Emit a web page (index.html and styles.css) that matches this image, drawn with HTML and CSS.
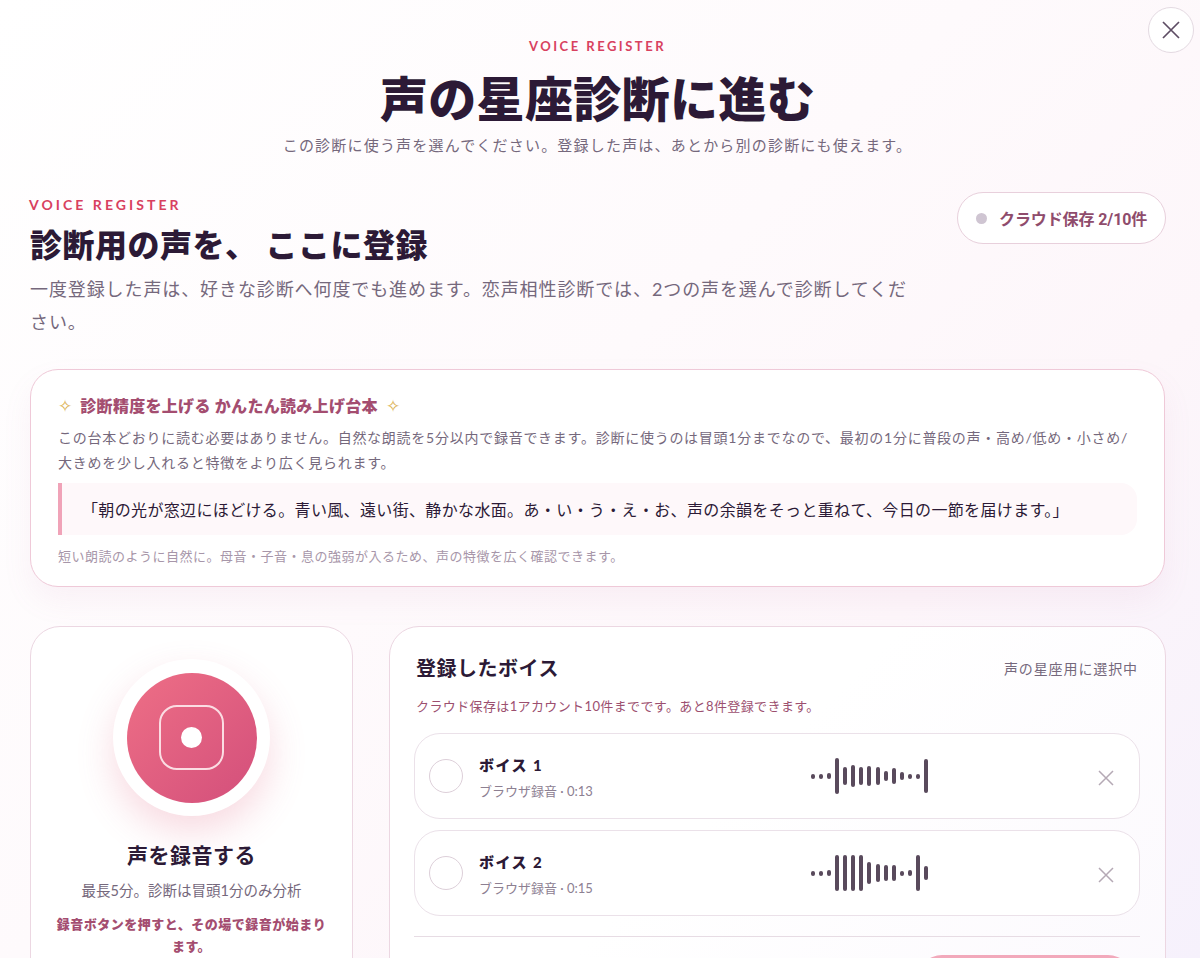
FILE: index.html
```html
<!DOCTYPE html>
<html lang="ja">
<head>
<meta charset="utf-8">
<title>声の星座診断に進む</title>
<link rel="stylesheet" href="styles.css">
</head>
<body>
<div class="modal">
  <button class="close" aria-label="閉じる"><svg viewBox="0 0 20 20" width="20" height="20"><path d="M2 2 L18 18 M18 2 L2 18"/></svg></button>
  <header class="top">
    <p class="eyebrow">VOICE REGISTER</p>
    <h1>声の星座診断に進む</h1>
    <p class="lead">この診断に使う声を選んでください。登録した声は、あとから別の診断にも使えます。</p>
  </header>
  <section class="intro">
    <div class="intro-text">
      <p class="eyebrow left">VOICE REGISTER</p>
      <h2>診断用の声を、 ここに登録</h2>
      <p class="desc">一度登録した声は、好きな診断へ何度でも進めます。恋声相性診断では、2つの声を選んで診断してください。</p>
    </div>
    <div class="pill"><span class="dot"></span>クラウド保存 2/10件</div>
  </section>
  <section class="card script">
    <h3><span class="spark">✧</span>診断精度を上げる かんたん読み上げ台本<span class="spark">✧</span></h3>
    <p class="script-help">この台本どおりに読む必要はありません。自然な朗読を5分以内で録音できます。診断に使うのは冒頭1分までなので、最初の1分に普段の声・高め/低め・小さめ/大きめを少し入れると特徴をより広く見られます。</p>
    <blockquote>「朝の光が窓辺にほどける。青い風、遠い街、静かな水面。あ・い・う・え・お、声の余韻をそっと重ねて、今日の一節を届けます。」</blockquote>
    <p class="script-note">短い朗読のように自然に。母音・子音・息の強弱が入るため、声の特徴を広く確認できます。</p>
  </section>
  <section class="columns">
    <div class="card rec">
      <div class="rec-btn"><div class="rec-inner"><span class="rec-square"><span class="rec-dot"></span></span></div></div>
      <h4>声を録音する</h4>
      <p class="rec-sub">最長5分。診断は冒頭1分のみ分析</p>
      <p class="rec-hint">録音ボタンを押すと、その場で録音が始まります。</p>
    </div>
    <div class="card voices">
      <div class="voices-head"><h4>登録したボイス</h4><span>声の星座用に選択中</span></div>
      <p class="quota">クラウド保存は1アカウント10件までです。あと8件登録できます。</p>
      <div class="voice">
        <span class="radio"></span>
        <div class="voice-info"><strong>ボイス 1</strong><small>ブラウザ録音 · 0:13</small></div>
        <div class="wave">
          <i class="h5"></i><i class="h5"></i><i class="h6"></i><i class="h36"></i><i class="h18"></i><i class="h22"></i><i class="h18"></i><i class="h20"></i><i class="h18"></i><i class="h10"></i><i class="h16"></i><i class="h8"></i><i class="h5"></i><i class="h5"></i><i class="h34"></i>
        </div>
        <svg class="del" viewBox="0 0 16 16" width="16" height="16"><path d="M1 1 L15 15 M15 1 L1 15"/></svg>
      </div>
      <div class="voice">
        <span class="radio"></span>
        <div class="voice-info"><strong>ボイス 2</strong><small>ブラウザ録音 · 0:15</small></div>
        <div class="wave">
          <i class="h5"></i><i class="h5"></i><i class="h6"></i><i class="h36"></i><i class="h36"></i><i class="h36"></i><i class="h36"></i><i class="h22"></i><i class="h18"></i><i class="h16"></i><i class="h16"></i><i class="h5"></i><i class="h6"></i><i class="h36"></i><i class="h14"></i>
        </div>
        <svg class="del" viewBox="0 0 16 16" width="16" height="16"><path d="M1 1 L15 15 M15 1 L1 15"/></svg>
      </div>
      <div class="divider"></div>
      <div class="actions"><button class="next"></button></div>
    </div>
  </section>
</div>
</body>
</html>
```
FILE: styles.css
```css
* { box-sizing: border-box; }
html, body { margin: 0; height: 958px; overflow: hidden; }
body {
  font-family: "Lato", "Noto Sans CJK JP", sans-serif;
  color: #2c1a36;
  background: linear-gradient(135deg, #ffffff 0%, #fefafc 45%, #fdf6fa 70%, #f6f1fc 100%);
}
.modal { position: relative; height: 958px; padding: 38px 35px 0 30px; overflow: hidden; }
p, h1, h2, h3, h4, blockquote { margin: 0; }
.close {
  position: absolute; top: 7px; right: 6px; width: 46px; height: 46px; padding: 0;
  border: 1px solid #e4dae2; border-radius: 50%; background: #fff;
  display: flex; align-items: center; justify-content: center;
}
.close path { stroke: #5d4c63; stroke-width: 1.7; fill: none; }
.top { text-align: center; }
.eyebrow { font-size: 13px; line-height: 16px; font-weight: 700; letter-spacing: 2.5px; color: #d8415f; }
h1 { font-size: 48px; line-height: 64px; font-weight: 900; margin-top: 10px; letter-spacing: .35px; color: #2c1a36; font-family: "Noto Sans CJK JP", sans-serif; }
.lead { font-size: 15px; line-height: 24px; letter-spacing: 1.2px; color: #75687c; margin-top: 5px; }
.intro { display: flex; justify-content: space-between; align-items: flex-start; margin-top: 39px; }
.intro-text { width: 880px; }
.eyebrow.left { font-size: 14px; line-height: 18px; letter-spacing: 3.05px; margin-left: -1px; }
h2 { font-size: 32px; line-height: 44px; font-weight: 900; margin-top: 9px; letter-spacing: .5px; }
.desc { font-size: 18px; line-height: 33px; letter-spacing: .9px; color: #75687c; margin-top: 6px; }
.pill {
  display: flex; align-items: center; gap: 12px; width: 209px; height: 52px; margin-top: -4px; margin-right: -1px; padding-left: 18px;
  border: 1px solid #e8d0dc; border-radius: 26px; background: #fff;
  font-size: 16px; font-weight: 700; letter-spacing: -.1px; color: #8f4c6c; white-space: nowrap;
  font-family: "Roboto", "Noto Sans CJK JP", sans-serif;
}
.dot { width: 11px; height: 11px; border-radius: 50%; background: #cfc5d2; }
.card { background: #fff; border: 1px solid #ecd7e2; }
.script {
  margin-top: 30px; height: 218px; padding: 25px 27px 0 27px; border-radius: 28px; border-color: #efc9d8;
  box-shadow: 0 14px 30px rgba(190, 120, 160, .08);
}
h3 { font-size: 16px; line-height: 22px; font-weight: 900; color: #a44d70; letter-spacing: .3px; display: flex; align-items: center; gap: 8px; }
.spark { color: #dcb14f; font-size: 17px; font-weight: 400; }
.script-help { font-size: 14px; line-height: 25px; letter-spacing: .74px; color: #75687c; margin-top: 8px; }
blockquote {
  margin-top: 8px; height: 52px; display: flex; align-items: center; padding-left: 20px; border-left: 4px solid #f0a3b8;
  border-radius: 0 16px 16px 0; background: #fef8fa; font-size: 16px; letter-spacing: .35px; color: #2c1a36;
}
.script-note { font-size: 13px; line-height: 20px; letter-spacing: .5px; color: #a796a9; margin-top: 11px; }
.columns { display: grid; grid-template-columns: 323px 777px; gap: 36px; margin-top: 39px; }
.rec { height: 500px; padding: 32px 20px 0; border-radius: 30px; text-align: center; }
.rec-btn {
  width: 157px; height: 157px; margin: 0 auto; border-radius: 50%; background: #fff;
  display: flex; align-items: center; justify-content: center;
  box-shadow: 0 16px 36px rgba(226, 100, 130, .24);
}
.rec-inner {
  width: 130px; height: 130px; border-radius: 50%;
  background: linear-gradient(135deg, #ee6f86 0%, #d34f7b 100%);
  display: flex; align-items: center; justify-content: center;
}
.rec-square {
  width: 65px; height: 65px; border: 2px solid #fbdde3; border-radius: 18px;
  display: flex; align-items: center; justify-content: center;
}
.rec-dot { width: 21px; height: 21px; border-radius: 50%; background: #fff; }
h4 { font-size: 20px; line-height: 30px; font-weight: 700; letter-spacing: .5px; }
.voices-head h4 { margin-left: 1px; }
.rec h4 { margin-top: 24px; font-size: 21px; }
.rec-sub { font-size: 14.5px; line-height: 22px; color: #75687c; margin-top: 10px; }
.rec-hint { font-size: 13px; line-height: 22px; font-weight: 900; letter-spacing: .5px; color: #a44d70; margin-top: 11px; }
.voices { height: 500px; padding: 26px 25px 0; border-radius: 30px; background: linear-gradient(135deg, #fff 40%, #fbf8fd 100%); }
.voices-head { display: flex; justify-content: space-between; align-items: center; }
.voices-head span { font-size: 14px; color: #75687c; letter-spacing: .9px; margin-right: 2px; }
.quota { font-size: 13px; line-height: 20px; color: #9c4f6f; letter-spacing: .38px; margin-top: 13px; margin-left: 1px; }
.voice {
  display: flex; align-items: center; height: 86px; margin-top: 11px; padding: 0 25px 0 14px;
  border: 1px solid #ebe1e9; border-radius: 26px; background: #fff; margin-left: -1px;
}
.quota + .voice { margin-top: 17px; }
.radio { width: 34px; height: 34px; border: 1.5px solid #ddcfd9; border-radius: 50%; flex: none; }
.voice-info { width: 348px; padding-left: 16px; display: flex; flex-direction: column; flex: none; margin-top: 2px; }
.voice-info strong { font-size: 15px; line-height: 22px; font-weight: 900; letter-spacing: 1.5px; }
.voice-info small { font-size: 13px; line-height: 20px; color: #8d8092; margin-top: 5px; }
.wave { display: flex; align-items: center; justify-content: flex-start; gap: 4.07px; width: 261px; height: 36px; flex: none; }
.wave i { display: block; width: 4px; border-radius: 2px; background: #594a5c; }
.h5 { height: 5px; } .h6 { height: 6px; } .h8 { height: 8px; } .h10 { height: 10px; } .h14 { height: 14px; }
.h16 { height: 16px; } .h18 { height: 18px; } .h20 { height: 20px; } .h22 { height: 22px; } .h34 { height: 34px; } .h36 { height: 36px; }
.del { margin-left: auto; margin-top: 4px; flex: none; }
.del path { stroke: #b5a9b5; stroke-width: 1.5; fill: none; }
.divider { height: 1px; background: #e7dce4; margin: 20px 0 0 -1px; }
.actions { display: flex; justify-content: flex-end; margin-top: 18px; }
.next { width: 216px; height: 50px; border: none; border-radius: 25px; background: #f2a9bb; margin-right: 7px; }
```
